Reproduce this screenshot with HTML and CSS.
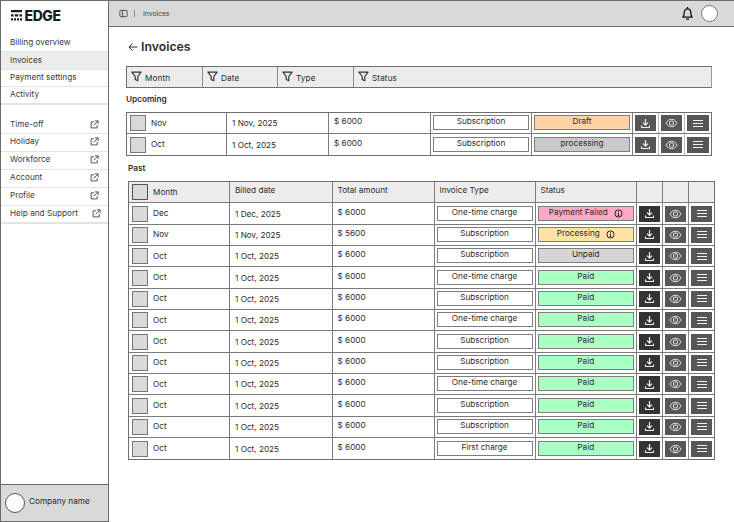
FILE: index.html
```html
<!DOCTYPE html>
<html lang="en">
<head>
<meta charset="utf-8">
<title>Invoices</title>
<link rel="stylesheet" href="styles.css">
</head>
<body>
<svg class="defs" width="0" height="0" aria-hidden="true">
  <symbol id="ext" viewBox="0 0 10 10"><path d="M4.500 2H1.200v6.800H8V5.500M5.500 1h3.500v3.500M9 1 4.200 5.800" fill="none" stroke="currentColor" stroke-width="1"/></symbol>
  <symbol id="filter" viewBox="0 0 12 12"><path d="M1 1.200h10L7.400 6v4.600L4.600 9.200V6z" fill="none" stroke="currentColor" stroke-width="1.300" stroke-linejoin="round"/></symbol>
  <symbol id="dl" viewBox="0 0 11 11"><path d="M5.500 1v6M3 4.700l2.500 2.500L8 4.700M1.500 7.500V9c0 .3.200.5.500.5h7c.3 0 .5-.2.500-.5V7.500" fill="none" stroke="currentColor" stroke-width="1.200"/></symbol>
  <symbol id="eye" viewBox="0 0 14 10"><path d="M1 5c1.500-2.600 3.500-4 6-4s4.500 1.400 6 4c-1.500 2.600-3.500 4-6 4S2.500 7.600 1 5z" fill="none" stroke="currentColor" stroke-width="1"/><circle cx="7" cy="5" r="2.300" fill="none" stroke="currentColor" stroke-width="1"/></symbol>
  <symbol id="menu" viewBox="0 0 10 7"><path d="M0 .5h10M0 3.500h10M0 6.500h10" stroke="currentColor" stroke-width="1"/></symbol>
  <symbol id="info" viewBox="0 0 10 10"><circle cx="5" cy="5" r="4" fill="none" stroke="currentColor" stroke-width="1"/><path d="M5 4.300v3M4 7.300h2M4.300 4.300H5M5 2.500v1" fill="none" stroke="currentColor" stroke-width=".9"/></symbol>
</svg>
<div class="app">
  <aside class="sidebar">
    <div class="logo">
      <svg class="logo-mark" viewBox="0 0 11 10.500" aria-hidden="true"><path d="M0 0h11v2.200H0zM0 4.200h2.500v2.200H0zM3.800 4.200h3.400v2.200H3.800zM8.500 4.200H11v2.200H8.500zM0 8.300h2v2.200H0zM3 8.300h2v2.200H3zM6 8.300h2v2.200H6zM9 8.300h2v2.200H9z"/></svg>
      <span class="logo-text">EDGE</span>
    </div>
    <nav class="nav nav-main">
      <a class="nav-item">Billing overview</a>
      <a class="nav-item active">Invoices</a>
      <a class="nav-item">Payment settings</a>
      <a class="nav-item">Activity</a>
    </nav>
    <nav class="nav nav-links">
      <a class="nav-item">Time-off<svg class="ext"><use href="#ext"/></svg></a>
      <a class="nav-item">Holiday<svg class="ext"><use href="#ext"/></svg></a>
      <a class="nav-item">Workforce<svg class="ext"><use href="#ext"/></svg></a>
      <a class="nav-item">Account<svg class="ext"><use href="#ext"/></svg></a>
      <a class="nav-item">Profile<svg class="ext"><use href="#ext"/></svg></a>
      <a class="nav-item">Help and Support<svg class="ext ext-shift"><use href="#ext"/></svg></a>
    </nav>
    <div class="company"><span class="avatar"></span><span class="company-name">Company name</span></div>
  </aside>
  <div class="main">
    <header class="topbar">
      <svg class="panel-icon" viewBox="0 0 10 10" aria-hidden="true"><rect x="1" y="1.500" width="8" height="7" rx="1" fill="none" stroke="currentColor"/><path d="M4 1.500v7" stroke="currentColor"/></svg>
      <span class="crumb-sep"></span>
      <span class="crumb">Invoices</span>
      <svg class="bell" viewBox="0 0 14 16" aria-hidden="true"><path d="M2 12c1-1.200 1.400-2 1.400-4.500C3.400 4.800 5 3 7 3s3.600 1.800 3.600 4.500c0 2.500.4 3.300 1.400 4.500z" fill="none" stroke="currentColor" stroke-width="1.400" stroke-linejoin="round"/><path d="M7 1v2M5.400 14h3.200" stroke="currentColor" stroke-width="1.500"/></svg>
      <span class="avatar avatar-top"></span>
    </header>
    <main class="content">
      <h1 class="title">
        <svg class="back" viewBox="0 0 10 10" aria-hidden="true"><path d="M9.500 5H1M4.500 1.500 1 5l3.500 3.500" fill="none" stroke="currentColor" stroke-width="1"/></svg>
        Invoices
      </h1>
      <div class="filters">
        <div class="filter f1"><svg class="filter-icon"><use href="#filter"/></svg>Month</div>
        <div class="filter f2"><svg class="filter-icon"><use href="#filter"/></svg>Date</div>
        <div class="filter f3"><svg class="filter-icon"><use href="#filter"/></svg>Type</div>
        <div class="filter f4"><svg class="filter-icon"><use href="#filter"/></svg>Status</div>
      </div>
      <h2 class="section">Upcoming</h2>
      <div class="table upcoming">
        <div class="row">
          <div class="cell first"><span class="check"></span>Nov</div><div class="cell">1 Nov, 2025</div><div class="cell amt">$ 6000</div>
          <div class="cell pill-cell"><span class="pill type">Subscription</span></div>
          <div class="cell pill-cell"><span class="pill draft">Draft</span></div>
          <div class="cell act"><span class="btn"><svg class="i-dl"><use href="#dl"/></svg></span></div><div class="cell act"><span class="btn"><svg class="i-eye"><use href="#eye"/></svg></span></div><div class="cell act"><span class="btn"><svg class="i-menu"><use href="#menu"/></svg></span></div>
        </div>
        <div class="row">
          <div class="cell first"><span class="check"></span>Oct</div><div class="cell">1 Oct, 2025</div><div class="cell amt">$ 6000</div>
          <div class="cell pill-cell"><span class="pill type">Subscription</span></div>
          <div class="cell pill-cell"><span class="pill pending">processing</span></div>
          <div class="cell act"><span class="btn"><svg class="i-dl"><use href="#dl"/></svg></span></div><div class="cell act"><span class="btn"><svg class="i-eye"><use href="#eye"/></svg></span></div><div class="cell act"><span class="btn"><svg class="i-menu"><use href="#menu"/></svg></span></div>
        </div>
      </div>
      <h2 class="section past-title">Past</h2>
      <div class="table past">
        <div class="row head">
          <div class="cell first"><span class="check strong"></span>Month</div><div class="cell amt">Billed date</div><div class="cell amt">Total amount</div><div class="cell amt">Invoice Type</div><div class="cell amt">Status</div><div class="cell"></div><div class="cell"></div><div class="cell"></div>
        </div>
        <div class="row"><div class="cell first"><span class="check"></span>Dec</div><div class="cell">1 Dec, 2025</div><div class="cell amt">$ 6000</div><div class="cell pill-cell"><span class="pill type">One-time charge</span></div><div class="cell pill-cell"><span class="pill failed">Payment Failed<svg class="info"><use href="#info"/></svg></span></div><div class="cell act"><span class="btn dark"><svg class="i-dl"><use href="#dl"/></svg></span></div><div class="cell act"><span class="btn"><svg class="i-eye"><use href="#eye"/></svg></span></div><div class="cell act"><span class="btn"><svg class="i-menu"><use href="#menu"/></svg></span></div></div>
        <div class="row"><div class="cell first"><span class="check"></span>Nov</div><div class="cell">1 Nov, 2025</div><div class="cell amt">$ 5600</div><div class="cell pill-cell"><span class="pill type">Subscription</span></div><div class="cell pill-cell"><span class="pill processing">Processing<svg class="info"><use href="#info"/></svg></span></div><div class="cell act"><span class="btn dark"><svg class="i-dl"><use href="#dl"/></svg></span></div><div class="cell act"><span class="btn"><svg class="i-eye"><use href="#eye"/></svg></span></div><div class="cell act"><span class="btn"><svg class="i-menu"><use href="#menu"/></svg></span></div></div>
        <div class="row"><div class="cell first"><span class="check"></span>Oct</div><div class="cell">1 Oct, 2025</div><div class="cell amt">$ 6000</div><div class="cell pill-cell"><span class="pill type">Subscription</span></div><div class="cell pill-cell"><span class="pill unpaid">Unpaid</span></div><div class="cell act"><span class="btn dark"><svg class="i-dl"><use href="#dl"/></svg></span></div><div class="cell act"><span class="btn"><svg class="i-eye"><use href="#eye"/></svg></span></div><div class="cell act"><span class="btn"><svg class="i-menu"><use href="#menu"/></svg></span></div></div>
        <div class="row"><div class="cell first"><span class="check"></span>Oct</div><div class="cell">1 Oct, 2025</div><div class="cell amt">$ 6000</div><div class="cell pill-cell"><span class="pill type">One-time charge</span></div><div class="cell pill-cell"><span class="pill paid">Paid</span></div><div class="cell act"><span class="btn dark"><svg class="i-dl"><use href="#dl"/></svg></span></div><div class="cell act"><span class="btn"><svg class="i-eye"><use href="#eye"/></svg></span></div><div class="cell act"><span class="btn"><svg class="i-menu"><use href="#menu"/></svg></span></div></div>
        <div class="row"><div class="cell first"><span class="check"></span>Oct</div><div class="cell">1 Oct, 2025</div><div class="cell amt">$ 6000</div><div class="cell pill-cell"><span class="pill type">Subscription</span></div><div class="cell pill-cell"><span class="pill paid">Paid</span></div><div class="cell act"><span class="btn dark"><svg class="i-dl"><use href="#dl"/></svg></span></div><div class="cell act"><span class="btn"><svg class="i-eye"><use href="#eye"/></svg></span></div><div class="cell act"><span class="btn"><svg class="i-menu"><use href="#menu"/></svg></span></div></div>
        <div class="row"><div class="cell first"><span class="check"></span>Oct</div><div class="cell">1 Oct, 2025</div><div class="cell amt">$ 6000</div><div class="cell pill-cell"><span class="pill type">One-time charge</span></div><div class="cell pill-cell"><span class="pill paid">Paid</span></div><div class="cell act"><span class="btn dark"><svg class="i-dl"><use href="#dl"/></svg></span></div><div class="cell act"><span class="btn"><svg class="i-eye"><use href="#eye"/></svg></span></div><div class="cell act"><span class="btn"><svg class="i-menu"><use href="#menu"/></svg></span></div></div>
        <div class="row"><div class="cell first"><span class="check"></span>Oct</div><div class="cell">1 Oct, 2025</div><div class="cell amt">$ 6000</div><div class="cell pill-cell"><span class="pill type">Subscription</span></div><div class="cell pill-cell"><span class="pill paid">Paid</span></div><div class="cell act"><span class="btn dark"><svg class="i-dl"><use href="#dl"/></svg></span></div><div class="cell act"><span class="btn"><svg class="i-eye"><use href="#eye"/></svg></span></div><div class="cell act"><span class="btn"><svg class="i-menu"><use href="#menu"/></svg></span></div></div>
        <div class="row"><div class="cell first"><span class="check"></span>Oct</div><div class="cell">1 Oct, 2025</div><div class="cell amt">$ 6000</div><div class="cell pill-cell"><span class="pill type">Subscription</span></div><div class="cell pill-cell"><span class="pill paid">Paid</span></div><div class="cell act"><span class="btn dark"><svg class="i-dl"><use href="#dl"/></svg></span></div><div class="cell act"><span class="btn"><svg class="i-eye"><use href="#eye"/></svg></span></div><div class="cell act"><span class="btn"><svg class="i-menu"><use href="#menu"/></svg></span></div></div>
        <div class="row"><div class="cell first"><span class="check"></span>Oct</div><div class="cell">1 Oct, 2025</div><div class="cell amt">$ 6000</div><div class="cell pill-cell"><span class="pill type">One-time charge</span></div><div class="cell pill-cell"><span class="pill paid">Paid</span></div><div class="cell act"><span class="btn dark"><svg class="i-dl"><use href="#dl"/></svg></span></div><div class="cell act"><span class="btn"><svg class="i-eye"><use href="#eye"/></svg></span></div><div class="cell act"><span class="btn"><svg class="i-menu"><use href="#menu"/></svg></span></div></div>
        <div class="row"><div class="cell first"><span class="check"></span>Oct</div><div class="cell">1 Oct, 2025</div><div class="cell amt">$ 6000</div><div class="cell pill-cell"><span class="pill type">Subscription</span></div><div class="cell pill-cell"><span class="pill paid">Paid</span></div><div class="cell act"><span class="btn dark"><svg class="i-dl"><use href="#dl"/></svg></span></div><div class="cell act"><span class="btn"><svg class="i-eye"><use href="#eye"/></svg></span></div><div class="cell act"><span class="btn"><svg class="i-menu"><use href="#menu"/></svg></span></div></div>
        <div class="row"><div class="cell first"><span class="check"></span>Oct</div><div class="cell">1 Oct, 2025</div><div class="cell amt">$ 6000</div><div class="cell pill-cell"><span class="pill type">Subscription</span></div><div class="cell pill-cell"><span class="pill paid">Paid</span></div><div class="cell act"><span class="btn dark"><svg class="i-dl"><use href="#dl"/></svg></span></div><div class="cell act"><span class="btn"><svg class="i-eye"><use href="#eye"/></svg></span></div><div class="cell act"><span class="btn"><svg class="i-menu"><use href="#menu"/></svg></span></div></div>
        <div class="row"><div class="cell first"><span class="check"></span>Oct</div><div class="cell">1 Oct, 2025</div><div class="cell amt">$ 6000</div><div class="cell pill-cell"><span class="pill type">First charge</span></div><div class="cell pill-cell"><span class="pill paid">Paid</span></div><div class="cell act"><span class="btn dark"><svg class="i-dl"><use href="#dl"/></svg></span></div><div class="cell act"><span class="btn"><svg class="i-eye"><use href="#eye"/></svg></span></div><div class="cell act"><span class="btn"><svg class="i-menu"><use href="#menu"/></svg></span></div></div>
      </div>
    </main>
  </div>
</div>
</body>
</html>
```
FILE: styles.css
```css
* { box-sizing: border-box; }
html, body { margin: 0; padding: 0; }
body {
  width: 734px;
  height: 522px;
  overflow: hidden;
  background: #fff;
  color: #2c2c2c;
  font-family: Inter, "Liberation Sans", sans-serif;
  font-size: 8.200px;
  line-height: 11px;
}
.defs { position: absolute; }
.app { display: flex; height: 522px; }

/* Sidebar */
.sidebar {
  width: 109px;
  flex: none;
  display: flex;
  flex-direction: column;
  border: 1px solid #6b6b6b;
}
.logo { display: flex; align-items: center; gap: 3px; height: 29px; padding: 0 0 0 9.500px; }
.logo-mark { width: 11px; height: 10.500px; fill: #1c1c1c; }
.logo-text { font-size: 14px; font-weight: 800; color: #1c1c1c; letter-spacing: -.4px; line-height: 12px; }
.nav { display: flex; flex-direction: column; }
.nav-main { margin-top: 5px; }
.nav-links { margin-top: 11.500px; }
.nav-item {
  display: flex;
  align-items: center;
  justify-content: space-between;
  height: 17.400px;
  padding: 0 9px 1px 9px;
  border-bottom: 1px solid #e3e3e3;
  color: #3a3a3a;
}
.nav-item:last-child { border-bottom-width: 2px; }
.nav-item.active { background: #ececec; }
.nav-links .nav-item { height: 17.950px; }
.ext { width: 9px; height: 9px; color: #444; }
.ext-shift { margin-right: -2px; }
.company {
  margin-top: auto;
  height: 37px;
  display: flex;
  align-items: center;
  gap: 4px;
  padding: 0 4px;
  background: #d9d9d9;
  border-top: 1px solid #6b6b6b;
}
.company-name { padding-bottom: 3px; }
.avatar {
  width: 20px;
  height: 20px;
  flex: none;
  border-radius: 50%;
  background: #fff;
  border: 1px solid #555;
}

/* Top bar */
.main { flex: 1; min-width: 0; display: flex; flex-direction: column; }
.topbar {
  height: 27px;
  flex: none;
  display: flex;
  align-items: center;
  padding: 0 16px 0 10px;
  background: #d9d9d9;
  border-top: 1px solid #6b6b6b;
  border-bottom: 1px solid #6b6b6b;
}
.panel-icon { width: 9px; height: 9px; color: #444; }
.crumb-sep { width: 1px; height: 7px; background: #8a8a8a; margin: 0 8px 0 6px; }
.crumb { font-size: 6.800px; color: #444; }
.bell { width: 13px; height: 15px; margin-left: auto; color: #111; }
.avatar-top { width: 17px; height: 17px; margin-left: 7px; border-color: #777; }

/* Content */
.content { padding: 0 0 0 17px; }
.title {
  display: flex;
  align-items: center;
  gap: 3px;
  margin: 12px 0 12px 2px;
  font-size: 12.300px;
  line-height: 15px;
  font-weight: 600;
  color: #2c2c2c;
}
.back { width: 10px; height: 10px; }
.filters {
  display: grid;
  grid-template-columns: 76px 75px 76px 1fr;
  width: 586px;
  height: 22px;
  background: #ececec;
  border: 1px solid #6e6e6e;
  border-right-color: #9a9a9a;
}
.filter {
  display: flex;
  align-items: center;
  gap: 3px;
  padding: 2px 0 0 4px;
  border-right: 1px solid #8a8a8a;
  letter-spacing: .1px;
}
.f4 { border-right: 0; }
.filter-icon { width: 11px; height: 11px; color: #333; margin-top: -3px; }
.section { margin: 6px 0 7px 0; font-size: 8.200px; line-height: 11px; font-weight: 600; color: #2c2c2c; }
.past-title { margin: 7px 0 7px 2px; }

/* Tables */
.table { border: 1px solid #6e6e6e; }
.upcoming { width: 586px; }
.past { width: 587px; margin-left: 2px; }
.row { display: grid; border-bottom: 1px solid #7a7a7a; }
.row:last-child { border-bottom: 0; }
.upcoming .row { grid-template-columns: 100px 102px 102px 101px 101px 26px 26px 1fr; height: 21px; }
.past .row { grid-template-columns: 101px 102.500px 102px 101px 101.500px 26px 26px 1fr; height: 21.350px; }
.head { background: #ececec; }
.cell {
  display: flex;
  align-items: center;
  min-width: 0;
  padding: 1px 0 0 5px;
  border-right: 1px solid #7d7d7d;
}
.cell:last-child { border-right: 0; }
.cell.amt { padding: 0 0 3px 5px; }
.cell.first { padding: 0 0 0 3px; gap: 5px; }
.check {
  width: 16px;
  height: 16px;
  flex: none;
  background: #d9d9d9;
  border: 1px solid #777;
}
.check.strong { border-color: #555; }
.cell.pill-cell { padding: 1px 2px 2px; justify-content: center; }
.pill {
  width: 100%;
  height: 15px;
  display: flex;
  align-items: center;
  justify-content: center;
  gap: 6px;
  padding-bottom: 2px;
  border: 1px solid #7d7d7d;
  color: #2c2c2c;
}
.type { background: #fff; }
.draft { background: #ffd2a8; }
.pending {
  background-color: #c9c9c9;
  background-image: radial-gradient(#a9a9a9 .5px, transparent .6px);
  background-size: 2px 2px;
}
.failed { background: #ffa9c4; }
.processing { background: #ffe3a6; }
.unpaid { background: #d5d5d5; }
.paid { background: #a9ffc4; }
.info { width: 9px; height: 9px; margin-top: 2px; color: #111; }
.cell.act { padding: 0 2px; justify-content: center; border-right-color: #bdbdbd; }
.past .row .cell.act { border-right-color: #8a8a8a; }
.btn {
  width: 100%;
  height: 16px;
  display: flex;
  align-items: center;
  justify-content: center;
  background: #565656;
  color: #f2f2f2;
}
.btn.dark { background: #333; }
.i-dl { width: 11px; height: 11px; }
.i-eye { width: 13px; height: 10px; }
.i-menu { width: 10px; height: 7px; }
```
